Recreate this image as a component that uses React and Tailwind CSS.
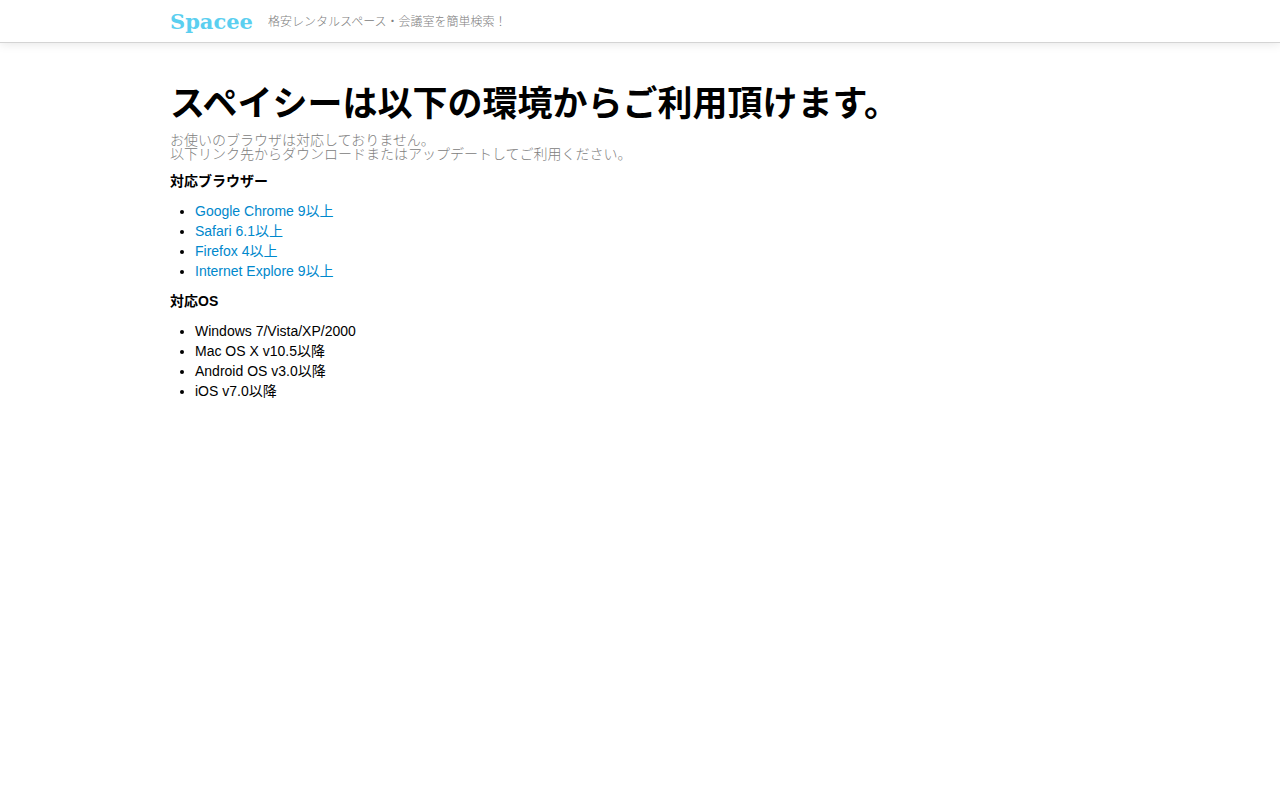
import React from "react";

const browsers = [
  { name: "Google Chrome 9以上", url: "#chrome" },
  { name: "Safari 6.1以上", url: "#safari" },
  { name: "Firefox 4以上", url: "#firefox" },
  { name: "Internet Explore 9以上", url: "#ie" },
];

const systems = [
  "Windows 7/Vista/XP/2000",
  "Mac OS X v10.5以降",
  "Android OS v3.0以降",
  "iOS v7.0以降",
];

function Header() {
  return (
    <header className="border-b border-[#d4d4d4] bg-white shadow-[0_1px_10px_rgba(0,0,0,0.1)]">
      <div className="mx-auto flex max-w-[940px] items-center gap-[15px] pt-[10px] pb-2">
        <a
          href="#top"
          className="font-['DejaVu_Serif','Liberation_Serif',serif] text-[21px] leading-6 font-bold text-[#5bcff0]"
        >
          Spacee
        </a>
        <p className="text-xs font-light text-[#808080]">
          格安レンタルスペース・会議室を簡単検索！
        </p>
      </div>
    </header>
  );
}

function App() {
  return (
    <div
      id="top"
      className="min-h-screen bg-white font-['Liberation_Sans','Noto_Sans_CJK_JP',sans-serif] text-sm leading-5 text-black"
    >
      <Header />

      <main className="mx-auto max-w-[940px] pt-[41px]">
        <h1 className="text-[35px] leading-10 font-bold">
          スペイシーは以下の環境からご利用頂けます。
        </h1>
        <p className="mt-[9px] text-sm leading-[14px] font-light text-[#808080]">
          お使いのブラウザは対応しておりません。
          <br />
          以下リンク先からダウンロードまたはアップデートしてご利用ください。
        </p>

        {/* Browsers */}
        <h2 className="mt-[10px] font-bold">対応ブラウザー</h2>
        <ul className="mt-[10px] ml-[25px] list-disc">
          {browsers.map((browser) => (
            <li key={browser.name}>
              <a href={browser.url} className="text-[#0088cc] hover:underline">
                {browser.name}
              </a>
            </li>
          ))}
        </ul>

        {/* OS */}
        <h2 className="mt-[10px] font-bold">対応OS</h2>
        <ul className="mt-[10px] ml-[25px] list-disc">
          {systems.map((system) => (
            <li key={system}>{system}</li>
          ))}
        </ul>
      </main>
    </div>
  );
}

export default App;
